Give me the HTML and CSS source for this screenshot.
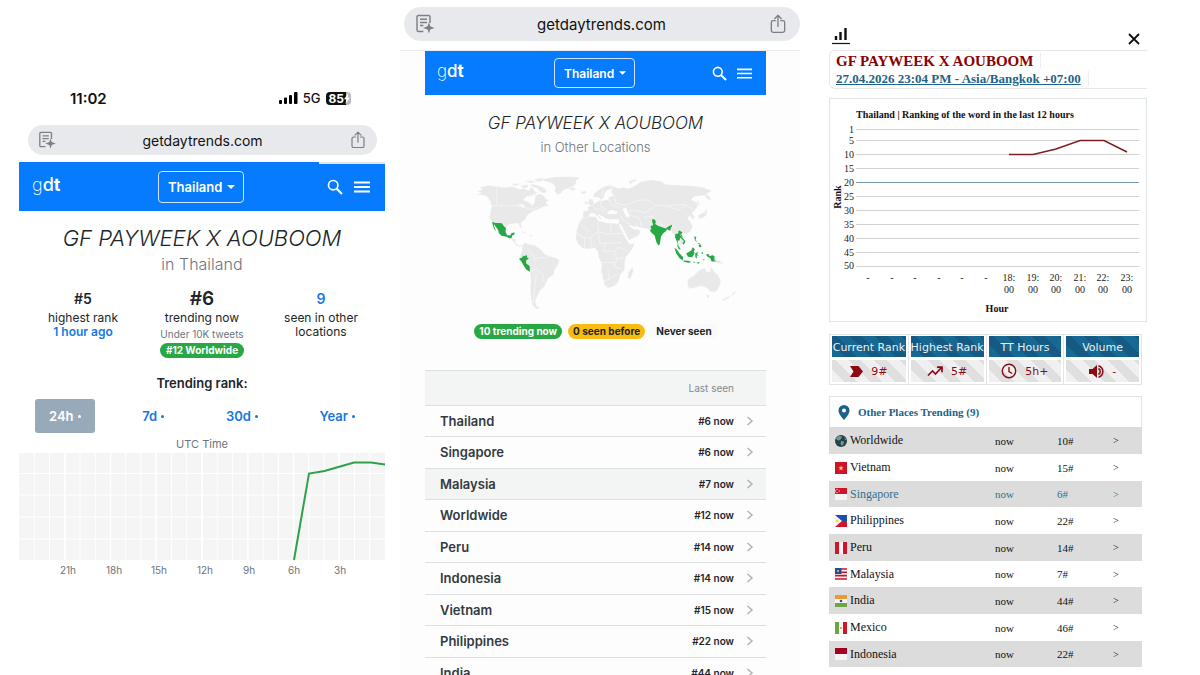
FILE: index.html
```
<!DOCTYPE html>
<html lang="en">
<head>
<meta charset="utf-8">
<meta name="viewport" content="width=device-width, initial-scale=1">
<title>GF PAYWEEK X AOUBOOM trends</title>
<link rel="stylesheet" href="styles.css">
</head>
<body>
<svg class="defs" aria-hidden="true">
  <symbol id="reader" viewBox="0 0 18 18"><path d="M13.500 8V2.500a1.200 1.200 0 0 0-1.200-1.200H3a1.200 1.200 0 0 0-1.200 1.200v12A1.200 1.200 0 0 0 3 15.700h4.500M4.500 4.800h6.300M4.500 7.600h6.300M4.500 10.400h3" fill="none" stroke="currentColor" stroke-width="1.300"/><path d="M12.500 7.500l1.200 3.600 4 1.400-4 1.400-1.200 3.600-1.200-3.600-4-1.400 4-1.400z" fill="currentColor"/></symbol>
  <symbol id="share" viewBox="0 0 18 18"><path d="M6.500 6H4.600A1.600 1.600 0 0 0 3 7.600v7.300a1.600 1.600 0 0 0 1.600 1.600h8.800a1.600 1.600 0 0 0 1.600-1.600V7.600A1.600 1.600 0 0 0 13.400 6h-1.900M9 11.200V1.600M6 4.200l3-3 3 3" fill="none" stroke="currentColor" stroke-width="1.200" stroke-linecap="round" stroke-linejoin="round"/></symbol>
  <symbol id="search" viewBox="0 0 16 16"><circle cx="6.200" cy="6.200" r="4.700" fill="none" stroke="currentColor" stroke-width="1.700"/><path d="M9.500 9.500l5.500 5.500" stroke="currentColor" stroke-width="2.200"/></symbol>
  <symbol id="menu" viewBox="0 0 16 16"><path d="M0 3.500h16M0 8h16M0 12.500h16" stroke="currentColor" stroke-width="1.800"/></symbol>
  <symbol id="chevron" viewBox="0 0 8 10"><path d="M1.500 1l4.500 4-4.500 4" fill="none" stroke="#b3b3b3" stroke-width="1.500"/></symbol>
</svg>
<main class="board">

<section class="phone phone-rank">
  <div class="status">
    <span class="time">11:02</span>
    <span class="signals">
      <svg width="19" height="12" viewBox="0 0 19 12"><rect x="0" y="8" width="3" height="4" rx="1"/><rect x="5" y="5.500" width="3" height="6.500" rx="1"/><rect x="10" y="3" width="3" height="9" rx="1"/><rect x="15" y="0" width="3.500" height="12" rx="1"/></svg>
      <span>5G</span>
      <span class="battery">85<svg width="6" height="11" viewBox="0 0 6 11"><path d="M4.500 0L0 6.200h2.400L1.500 11 6 4.600H3.600z" fill="#fff"/></svg></span>
    </span>
  </div>
  <div class="address">
    <svg class="ic" width="18" height="18"><use href="#reader"/></svg>
    <input type="text" value="getdaytrends.com" aria-label="Address">
    <svg class="ic" width="18" height="18"><use href="#share"/></svg>
  </div>
  <header class="nav loading">
    <a class="logo" href="#"><span class="g">g</span>d<b>t</b></a>
    <label class="place"><select aria-label="Location"><option>Thailand</option></select><svg width="8" height="4" viewBox="0 0 8 4"><path d="M0 0h8L4 4z" fill="#fff"/></svg></label>
    <div class="tools">
      <button type="button" aria-label="Search"><svg width="16" height="16"><use href="#search"/></svg></button>
      <button type="button" aria-label="Menu"><svg width="16" height="16"><use href="#menu"/></svg></button>
    </div>
  </header>
  <h1>GF PAYWEEK X AOUBOOM</h1>
  <p class="sub">in Thailand</p>
  <div class="facts">
    <div><strong>#5</strong><p>highest rank</p><a href="#">1 hour ago</a></div>
    <div><strong class="big">#6</strong><p>trending now</p><small>Under 10K tweets</small><span class="pill green">#12 Worldwide</span></div>
    <div><strong class="blue">9</strong><p>seen in other<br>locations</p></div>
  </div>
  <h2>Trending rank:</h2>
  <div class="periods">
    <button type="button" class="on">24h <i></i></button>
    <button type="button">7d <i></i></button>
    <button type="button">30d <i></i></button>
    <button type="button">Year <i></i></button>
  </div>
  <p class="utc">UTC Time</p>
  <svg class="day-chart" viewBox="0 0 366 125" role="img" aria-label="Trending rank over 24 hours">
    <rect width="366" height="107" fill="#f5f5f5"/>
    <path d="M15.250 0v107M30.500 0v107M45.750 0v107M61 0v107M76.250 0v107M91.500 0v107M106.750 0v107M122 0v107M137.250 0v107M152.500 0v107M167.750 0v107M183 0v107M198.250 0v107M213.500 0v107M228.750 0v107M244 0v107M259.250 0v107M274.500 0v107M289.750 0v107M305 0v107M320.250 0v107M335.500 0v107M350.750 0v107M0 20.500h366M0 42h366M0 64h366M0 86h366" stroke="#fff" stroke-width="1"/>
    <path d="M45.750 0v107M91.500 0v107M137.250 0v107M183 0v107M228.750 0v107M274.500 0v107M320.250 0v107" stroke="#fff" stroke-width="1.500"/>
    <path d="M275 107L290 20.500 305.500 18 335 9.500H352L366 11.500" fill="none" stroke="#2fa04c" stroke-width="2"/>
    <g font-size="10" fill="#6e7378" text-anchor="middle"><text x="49" y="121">21h</text><text x="95" y="121">18h</text><text x="140" y="121">15h</text><text x="186" y="121">12h</text><text x="230" y="121">9h</text><text x="275" y="121">6h</text><text x="321" y="121">3h</text></g>
  </svg>
</section>

<section class="phone phone-places">
  <div class="browser">
    <div class="address large">
      <svg class="ic" width="20" height="20"><use href="#reader"/></svg>
      <input type="text" value="getdaytrends.com" aria-label="Address">
      <svg class="ic" width="20" height="20"><use href="#share"/></svg>
    </div>
  </div>
  <div class="page">
    <header class="nav small">
      <a class="logo" href="#"><span class="g">g</span>d<b>t</b></a>
      <label class="place"><select aria-label="Location"><option>Thailand</option></select><svg width="7" height="4" viewBox="0 0 8 4"><path d="M0 0h8L4 4z" fill="#fff"/></svg></label>
      <div class="tools">
        <button type="button" aria-label="Search"><svg width="15" height="15"><use href="#search"/></svg></button>
        <button type="button" aria-label="Menu"><svg width="15" height="15"><use href="#menu"/></svg></button>
      </div>
    </header>
    <h1>GF PAYWEEK X AOUBOOM</h1>
    <p class="sub">in Other Locations</p>
    <svg class="map" viewBox="0 0 870 450" role="img" aria-label="World map of trending locations">
      <g fill="#e9e9e9" stroke="#fdfdfd" stroke-width="1">
        <path d="M54 96L72 89 60 84 75 78 66 72 95 66 118 70 140 73 165 70 185 78 200 76 213 82 222 70 230 82 238 88 226 96 205 100 197 110 212 116 224 126 230 116 233 96 246 91 258 98 264 106 272 110 263 118 273 126 255 130 242 137 228 142 215 150 206 158 205 166 189 177 192 193 187 191 182 179 168 180 156 181 146 191 140 185 125 178 105 175 97 165 98 148 103 129 98 112 88 98 72 95z"/>
        <path d="M156 222L168 223 175 228 173 236 182 244 192 243 188 248 178 246 168 235z"/>
        <path d="M185 203L198 204 213 212 203 210zM214 213L225 214 222 217 214 216z"/>
        <path d="M252 48L285 42 330 40 365 43 352 54 354 63 335 74 318 79 305 92 298 93 290 84 292 72 283 60 262 55z"/>
        <path d="M188 68L208 64 212 72 198 76zM217 62L240 66 258 74 268 86 256 90 246 84 238 76 222 70zM164 62L184 60 182 66 168 67zM200 54L222 52 234 56 220 60zM228 48L252 44 254 52 240 56zM333 75L349 72 352 79 340 82z"/>
        <path d="M192 247L202 236 212 241 228 243 240 250 250 258 260 270 275 277 295 282 304 290 298 305 290 315 286 332 270 343 264 358 256 370 248 376 242 388 236 400 232 410 236 424 247 431 236 433 224 422 220 405 217 380 219 350 217 322 200 308 190 293 184 284 188 272 193 262z"/>
        <path d="M372 164L395 158 412 160 420 172 445 178 480 180 490 205 500 222 512 240 527 238 520 255 500 280 497 300 498 315 485 330 480 350 468 365 448 371 438 362 432 340 428 318 430 300 420 280 418 262 408 252 385 255 372 252 358 238 352 225 355 200 362 178z"/>
        <path d="M520 309L524 320 514 344 507 342 508 325z"/>
        <path d="M406 103L405 93 420 80 435 70 452 66 466 70 462 76 448 79 438 90 436 102 426 110 420 101z"/>
        <path d="M374 160L374 143 390 141 387 131 402 124 414 116 422 112 436 111 450 108 450 100 466 97 458 88 456 80 465 70 480 76 490 72 510 76 530 66 545 56 575 50 605 54 620 64 660 66 700 68 730 72 755 82 748 88 738 92 750 100 755 112 742 106 735 96 715 98 700 102 696 110 712 118 713 130 705 140 697 149 706 160 699 168 690 156 684 164 692 175 700 188 692 204 675 212 665 210 662 216 676 232 664 246 650 222 638 208 636 198 625 196 617 206 600 220 585 215 575 200 560 194 545 192 528 186 530 196 545 200 540 214 507 231 498 214 482 190 480 180 480 167 450 168 438 164 434 158 428 160 426 168 415 156 405 148 395 150 388 162 378 164z"/>
        <path d="M388 119L393 106 402 108 408 123 394 127zM378 115L386 113 387 122 379 124zM367 85L382 83 384 90 371 92zM510 54L528 48 536 50 520 57 514 65zM715 157L724 150 735 146 739 134 742 142 740 156 728 163 720 166zM712 110L718 116 718 132 713 122z"/>
        <path d="M684 346L700 336 712 325 725 315 738 312 740 322 750 324 755 307 762 322 775 334 783 350 778 368 768 382 752 382 740 370 725 364 705 370 690 373 684 362z"/>
        <path d="M763 283L780 290 790 299 776 298 763 292zM740 392L749 392 747 399 742 399zM819 384L828 379 824 389 812 394zM785 406L808 395 810 399 791 409z"/>
      </g>
      <g fill="#fdfdfd"><path d="M446 145L460 139 477 146 472 151 448 151zM491 136L503 132 505 143 514 157 505 163 498 153zM444 98L447 82 452 82 450 102 438 106zM420 151L434 161 429 164 418 155zM178 124L190 122 202 127 198 133 190 127z"/><path d="M480 181L507 234 511 230 487 183z"/><path d="M510 186L526 198 532 194 516 184z"/></g>
      <path d="M105 127H175L196 131 222 138 242 130M118 70V127M232 84L224 95M354 207L378 222 395 222 419 203 419 172M419 203L455 214 457 179M378 222V250M395 222L400 252M419 203L424 238 455 238 490 237M457 209H490M440 240L434 262 465 262 475 285 497 282M430 295H465L470 310 490 315M451 320V345L435 350M451 345L470 332M366 180L394 204M465 262L480 250 503 260M475 285L466 303M218 257L214 267 230 274 228 288 244 280 273 280M218 322L235 315 247 322 258 338 252 350 266 356M235 334L225 415M402 128L412 138 424 135 439 145M425 114L428 131 445 137M450 110L460 124 485 133M466 98L472 121 505 125 531 112 565 109 589 126 621 127 647 125 675 123 700 137M505 143L529 141 555 148 585 131M515 156L540 162 548 188M485 156L498 174 514 182M552 162L580 158 584 170M621 127L655 140 678 127M600 178L620 190 640 184 658 203 676 210M436 71L429 99M455 69L460 87" fill="none" stroke="#f8f8f8" stroke-width="2"/>
      <g fill="#28a745">
        <path d="M104 174L112 177 125 178 133 179 138 186 145 192 144 205 149 214 158 215 162 208 172 206 169 213 163 216 163 221 157 224 147 219 132 216 124 208 122 199 114 188 110 181 111 191 116 203 110 196 107 186z"/>
        <path d="M184 284L192 281 197 275 203 277 204 272 208 275 207 280 213 283 205 289 205 298 213 303 216 308 216 323 206 317 198 305 191 292z"/>
        <path d="M578 168L586 167 590 174 588 181 596 186 610 191 620 194 624 190 631 186 637 183 638 188 634 193 633 201 627 199 624 196 620 202 611 209 605 219 602 240 598 245 592 236 586 214 578 208 574 204 573 198 577 196 574 188 582 184 580 176z"/>
        <path d="M648 210L654 211 657 206 657 200 665 203 666 208 660 209 664 217 672 225 678 232 672 243 669 236 674 233 666 224 662 222 660 230 655 230 655 237 660 246 654 239 651 229 647 221zM660 200L669 206 665 211 671 222 665 217 661 209z"/>
        <path d="M645 252L651 255 660 268 671 280 670 289 661 283 651 269zM652 240L658 247 664 257 658 256zM672 289L686 290 696 294 686 296 673 293zM680 268L687 265 695 259 700 250 706 257 702 262 705 267 698 280 685 278zM707 267L718 264 712 269 717 275 711 274 712 284 707 280zM739 271L746 270 749 276 759 274 764 277 764 292 755 292 752 283 742 277zM704 218L710 219 708 228 714 235 706 229zM717 244L724 242 725 249 719 250zM715 237L721 238 719 243zM699 293L707 294 705 297zM710 297L720 293 717 299zM724 268L729 264 730 270zM730 285L735 286 732 289zM764 289L768 291 765 294z"/>
      </g>
    </svg>
    <div class="legend"><span class="pill green">10 trending now</span><span class="pill amber">0 seen before</span><span class="pill pale">Never seen</span></div>
    <table class="places">
      <thead><tr><th></th><th class="seen">Last seen</th><th></th></tr></thead>
      <tbody>
        <tr><td><a href="#">Thailand</a></td><td class="seen">#6 now</td><td><svg width="8" height="10"><use href="#chevron"/></svg></td></tr>
        <tr><td><a href="#">Singapore</a></td><td class="seen">#6 now</td><td><svg width="8" height="10"><use href="#chevron"/></svg></td></tr>
        <tr class="hover"><td><a href="#">Malaysia</a></td><td class="seen">#7 now</td><td><svg width="8" height="10"><use href="#chevron"/></svg></td></tr>
        <tr><td><a href="#">Worldwide</a></td><td class="seen">#12 now</td><td><svg width="8" height="10"><use href="#chevron"/></svg></td></tr>
        <tr><td><a href="#">Peru</a></td><td class="seen">#14 now</td><td><svg width="8" height="10"><use href="#chevron"/></svg></td></tr>
        <tr><td><a href="#">Indonesia</a></td><td class="seen">#14 now</td><td><svg width="8" height="10"><use href="#chevron"/></svg></td></tr>
        <tr><td><a href="#">Vietnam</a></td><td class="seen">#15 now</td><td><svg width="8" height="10"><use href="#chevron"/></svg></td></tr>
        <tr><td><a href="#">Philippines</a></td><td class="seen">#22 now</td><td><svg width="8" height="10"><use href="#chevron"/></svg></td></tr>
        <tr><td><a href="#">India</a></td><td class="seen">#44 now</td><td><svg width="8" height="10"><use href="#chevron"/></svg></td></tr>
      </tbody>
    </table>
  </div>
</section>

<section class="report">
  <div class="report-top">
    <svg width="18" height="18" viewBox="0 0 18 18"><path d="M4 9v4M8.500 5v8M13.500 1v12" stroke="#111" stroke-width="2.400"/><path d="M0 16.500h18" stroke="#111" stroke-width="1.200"/></svg>
    <button type="button" aria-label="Close"><svg width="12" height="12" viewBox="0 0 12 12"><path d="M1 1l10 10M11 1L1 11" stroke="#111" stroke-width="1.800"/></svg></button>
  </div>
  <div class="report-head">
    <h1><span>GF PAYWEEK X AOUBOOM</span></h1>
    <p><a href="#">27.04.2026 23:04 PM - Asia/Bangkok +07:00</a></p>
  </div>
  <div class="chart-box">
    <svg viewBox="0 0 316 222" role="img" aria-label="Ranking of the word in the last 12 hours">
      <text class="b" x="26" y="19">Thailand | Ranking of the word in the last 12 hours</text>
      <path d="M26 30.500h283M26 41.500h283M26 55.500h283M26 69.500h283M26 97.500h283M26 111.500h283M26 125.500h283M26 139.500h283M26 153.500h283M26 167.500h283" stroke="#d2d2d2"/>
      <path d="M26 83.500h283" stroke="#7896ae"/>
      <path d="M179 55.500H203L226 50 250 41.500H274L297 53" fill="none" stroke="#801d22" stroke-width="1.500"/>
      <g text-anchor="end"><text x="24" y="34">1</text><text x="24" y="45">5</text><text x="24" y="59">10</text><text x="24" y="73">15</text><text x="24" y="87">20</text><text x="24" y="101">25</text><text x="24" y="115">30</text><text x="24" y="129">35</text><text x="24" y="143">40</text><text x="24" y="157">45</text><text x="24" y="170">50</text></g>
      <g text-anchor="middle"><text x="38" y="182">-</text><text x="62" y="182">-</text><text x="85" y="182">-</text><text x="109" y="182">-</text><text x="132" y="182">-</text><text x="156" y="182">-</text>
      <text x="179" y="182">18:</text><text x="203" y="182">19:</text><text x="226" y="182">20:</text><text x="250" y="182">21:</text><text x="273" y="182">22:</text><text x="297" y="182">23:</text>
      <text x="179" y="194">00</text><text x="203" y="194">00</text><text x="226" y="194">00</text><text x="250" y="194">00</text><text x="273" y="194">00</text><text x="297" y="194">00</text>
      <text class="b" x="167" y="213">Hour</text><text class="b" transform="translate(11 98) rotate(-90)">Rank</text></g>
    </svg>
  </div>
  <dl class="stats">
    <div><dt>Current Rank</dt><dd><svg width="13" height="11" viewBox="0 0 13 11"><path d="M0 0h8.500L13 5.500 8.500 11H0l3.500-5.500z" fill="#8b0b14"/></svg>9#</dd></div>
    <div><dt>Highest Rank</dt><dd><svg width="16" height="11" viewBox="0 0 16 11"><path d="M1 9.500l4.500-4.500 3 3L14 2M10 1.200h5v5" fill="none" stroke="#8b0b14" stroke-width="1.700"/></svg>5#</dd></div>
    <div><dt>TT Hours</dt><dd><svg width="16" height="16" viewBox="0 0 16 16"><circle cx="8" cy="8" r="6.700" fill="none" stroke="#8b0b14" stroke-width="1.400"/><path d="M8 4v4.500l3.200 2" fill="none" stroke="#8b0b14" stroke-width="1.400"/></svg>5h+</dd></div>
    <div><dt>Volume</dt><dd><svg width="15" height="13" viewBox="0 0 15 13"><path d="M0 4h3.500L8 0v13L3.500 9H0z" fill="#8b0b14"/><path d="M9.500 3.500c2.300 1.500 2.300 4.500 0 6M9.500.8c5.800 2 5.800 9.400 0 11.400" fill="none" stroke="#8b0b14" stroke-width="1.500"/></svg>-</dd></div>
  </dl>
  <div class="others">
    <h2><svg width="12" height="15" viewBox="0 0 12 15"><path fill-rule="evenodd" d="M6 0a5.500 5.500 0 0 0-5.500 5.500C.500 9.500 6 15 6 15s5.500-5.500 5.500-9.500A5.500 5.500 0 0 0 6 0zm0 3.500a2 2 0 1 1 0 4 2 2 0 0 1 0-4z" fill="#1a628a"/></svg>Other Places Trending (9)</h2>
    <table>
      <tbody>
      <tr><td><a href="#"><svg width="12" height="12" viewBox="0 0 12 12"><circle cx="6" cy="6" r="6" fill="#24414d"/><path d="M1 3l3-2 3 .5L6 4 4 5.500 2 5zM6 6l3 .5L8.500 9 7 11 5.500 9zM9.500 2L11.500 5 10 5z" fill="#6f9c91"/></svg>Worldwide</a></td><td>now</td><td>10#</td><td>&gt;</td></tr>
      <tr><td><a href="#"><svg width="12" height="12" viewBox="0 0 12 12"><path fill="#d0142c" d="M0 0h12v12H0z"/><path d="M6 3.500l.700 1.800h1.800L7.100 6.500l.500 1.900L6 7.300 4.400 8.400l.500-1.900L3.500 5.300h1.800z" fill="#ffd84a"/></svg>Vietnam</a></td><td>now</td><td>15#</td><td>&gt;</td></tr>
      <tr class="current"><td><a href="#"><svg width="12" height="12" viewBox="0 0 12 12"><path fill="#f4f4f4" d="M0 0h12v12H0z"/><path fill="#d0142c" d="M0 0h12v6H0z"/><path d="M2.800 1.500a1.700 1.700 0 1 0 0 3" fill="none" stroke="#f6b5bc" stroke-width=".8"/><circle cx="4.200" cy="3" r=".7" fill="#f6b5bc"/></svg>Singapore</a></td><td>now</td><td>6#</td><td>&gt;</td></tr>
      <tr><td><a href="#"><svg width="12" height="12" viewBox="0 0 12 12"><path fill="#1d50a8" d="M0 0h12v6H0z"/><path fill="#d0142c" d="M0 6h12v6H0z"/><path fill="#f4f4f4" d="M0 0l7 6-7 6z"/><circle cx="2.200" cy="6" r="1.400" fill="#ffd84a"/></svg>Philippines</a></td><td>now</td><td>22#</td><td>&gt;</td></tr>
      <tr><td><a href="#"><svg width="12" height="12" viewBox="0 0 12 12"><path fill="#f4f4f4" d="M0 0h12v12H0z"/><path fill="#d0142c" d="M0 0h4v12H0zM8 0h4v12H8z"/></svg>Peru</a></td><td>now</td><td>14#</td><td>&gt;</td></tr>
      <tr><td><a href="#"><svg width="12" height="12" viewBox="0 0 12 12"><path fill="#f4f4f4" d="M0 0h12v12H0z"/><path d="M0 1h12M0 4.300h12M0 7.600h12M0 11h12" stroke="#d0142c" stroke-width="1.600"/><path fill="#22508f" d="M0 0h6.500v6H0z"/><circle cx="3" cy="3" r="1.100" fill="#c9c96a"/></svg>Malaysia</a></td><td>now</td><td>7#</td><td>&gt;</td></tr>
      <tr><td><a href="#"><svg width="12" height="12" viewBox="0 0 12 12"><path fill="#f4f4f4" d="M0 0h12v12H0z"/><path fill="#f4962c" d="M0 0h12v4H0z"/><path fill="#6da544" d="M0 8h12v4H0z"/><circle cx="6" cy="6" r="1.300" fill="#2b57ad"/></svg>India</a></td><td>now</td><td>44#</td><td>&gt;</td></tr>
      <tr><td><a href="#"><svg width="12" height="12" viewBox="0 0 12 12"><path fill="#f4f4f4" d="M0 0h12v12H0z"/><path fill="#6da544" d="M0 0h4v12H0z"/><path fill="#d0142c" d="M8 0h4v12H8z"/><circle cx="6" cy="6" r="1" fill="#c98f4a"/></svg>Mexico</a></td><td>now</td><td>46#</td><td>&gt;</td></tr>
      <tr><td><a href="#"><svg width="12" height="12" viewBox="0 0 12 12"><path fill="#f4f4f4" d="M0 0h12v12H0z"/><path fill="#a2001d" d="M0 0h12v6H0z"/></svg>Indonesia</a></td><td>now</td><td>22#</td><td>&gt;</td></tr>
      </tbody>
    </table>
  </div>
</section>
</main>
</body>
</html>
```
FILE: styles.css
```
* { box-sizing: border-box; }
body, h1, h2, p, dl, dd { margin: 0; }
body { background: #fff; color: #212529; font-family: Inter, "Liberation Sans", sans-serif; font-size: 12px; }
a { color: inherit; text-decoration: none; }
button, input, select { font: inherit; color: inherit; background: none; border: 0; padding: 0; margin: 0; }
svg { display: block; flex: none; }
table { width: 100%; border-collapse: collapse; }
td, th { padding: 0; text-align: left; }
.defs { position: absolute; width: 0; height: 0; }
.board { display: grid; grid-template-columns: repeat(3, minmax(0, 1fr)); height: 100vh; overflow: hidden; }

.phone { text-align: center; }
.phone-rank { padding: 84px 15px 0 19px; }
.status { display: flex; justify-content: space-between; align-items: center; height: 28px; padding: 0 34px 0 51px; color: #111; }
.time { font-size: 15px; font-weight: 600; }
.signals { display: flex; align-items: center; gap: 5px; font-size: 13px; font-weight: 500; }
.battery { display: flex; align-items: center; height: 13px; padding: 0 1px 0 3px; border-radius: 4px; background: linear-gradient(90deg, #111 82%, #b8b8b8 82%); color: #fff; font-size: 12px; font-weight: 700; }

.address { display: flex; align-items: center; height: 30px; margin: 13px 8px 7px 9px; padding: 0 10px; border-radius: 15px; background: #e8e9ed; color: #111; font-size: 14px; }
.address input { flex: 1; min-width: 0; text-align: center; outline: 0; }
.ic { color: #7d7f84; }
.address.large { height: 34px; margin: 0 0 0 4px; border-radius: 17px; padding: 0 12px 0 11px; font-size: 15px; }

.nav { display: grid; grid-template-columns: 1fr auto 1fr; align-items: center; height: 49px; padding: 0 15px 0 13px; background: #067bfe; color: #fff; }
.loading { background: linear-gradient(90deg, transparent 82%, #dfe5ea 82%) 0 0 / 100% 2px no-repeat #067bfe; }
.logo { justify-self: start; font-size: 18px; line-height: 22px; font-weight: 500; padding-bottom: 4px; }
.logo .g { font-weight: 200; }
.logo b { font-weight: 700; }
.place { display: flex; align-items: center; gap: 4px; height: 32px; padding: 0 8px 0 9px; border: 1px solid #cfe5ff; border-radius: 4px; font-size: 13px; font-weight: 600; }
.place select { appearance: none; }
.place option { color: #212529; }
.tools { justify-self: end; display: flex; gap: 11px; }
.nav.small { height: 44px; padding: 0 14px 0 12px; }
.small .logo { font-size: 17px; }
.small .place { height: 30px; font-size: 12px; }
.small .tools { gap: 10px; }

.phone h1 { font-size: 22px; line-height: 32px; font-weight: 300; font-style: italic; margin-top: 11px; white-space: nowrap; }
.sub { font-size: 16px; line-height: 20px; font-weight: 300; color: #6c757d; }
.facts { display: grid; grid-template-columns: 128px 1fr 128px; margin-top: 14px; font-size: 12px; line-height: 14px; }
.facts div { display: flex; flex-direction: column; align-items: center; }
.facts strong { font-size: 14px; line-height: 22px; font-weight: 600; margin-bottom: 1px; }
.facts .big { font-size: 19px; }
.facts a { color: #1478ea; font-weight: 600; }
.facts .blue { color: #1478ea; }
.facts small { font-size: 10px; line-height: 16px; color: #6c757d; padding-top: 1px; margin-bottom: 1px; }
.pill { height: 15px; padding: 0 6px; border-radius: 8px; font-size: 10px; line-height: 15px; font-weight: 700; white-space: nowrap; }
.green { background: #28a745; color: #fff; }
.amber { background: #f8bb10; }
.pale { background: #f8f9fa; }
.phone h2 { font-size: 13px; line-height: 18px; font-weight: 600; margin-top: 16px; }
.periods { display: flex; justify-content: space-between; padding: 0 16px; margin-top: 7px; }
.periods button { display: flex; align-items: center; gap: 4px; height: 34px; padding: 0 14px; border-radius: 3px; color: #1478dc; font-size: 13px; font-weight: 600; }
.periods i { width: 3px; height: 3px; border-radius: 50%; background: currentColor; }
.periods .on { background: #98a9b9; color: #fff; }
.utc { font-size: 11px; line-height: 14px; color: #6c757d; margin: 4px 0 2px; }
.day-chart { width: 100%; overflow: visible; }

.phone-places { background: #fdfdfd; }
.browser { padding: 7px 0 9px; border-bottom: 1px solid #ececec; background: #fff; }
.page { padding: 0 34px 0 25px; }
.phone-places h1 { font-size: 17px; line-height: 28px; margin-top: 14px; }
.phone-places .sub { font-size: 13px; }
.map { width: 86%; margin: 6px auto 9px 32px; }
.legend { display: flex; justify-content: center; gap: 6px; margin-bottom: 31px; }
.legend .pill { padding: 0 5px; }
.places tr { height: 31px; border-bottom: 1px solid #dcdfe1; }
.places tbody tr:nth-child(even) { height: 32px; }
.places thead tr { height: 35px; border-top: 1px solid #dcdfe1; background: #f3f4f4; }
.places .seen { text-align: right; font-size: 10px; font-weight: 600; }
.places thead .seen { font-weight: 400; color: #85898d; }
.places td:first-child { padding-left: 15px; font-size: 13px; font-weight: 600; color: #343a40; }
.places td:last-child, .places th:last-child { width: 32px; padding-left: 12px; }
.places .hover { background: #f3f4f4; }

.report { padding: 26px 53px 0 29px; font-family: "Liberation Serif", serif; color: #111; }
.report-top { display: flex; justify-content: space-between; align-items: flex-start; height: 24px; padding: 1px 7px 0 3px; }
.report-top button { padding-top: 6px; }
.report-head { padding: 1px 6px 0; height: 39px; border: 1px solid #e8e8e8; border-right: 0; border-radius: 6px 0 0 6px; }
.report-head h1 { font-size: 15px; line-height: 18px; color: #8b0000; }
.report-head h1 span, .report-head p a { padding-right: 7px; border-right: 1px solid #eee; }
.report-head p { font-size: 13px; line-height: 17px; font-weight: 700; }
.report-head p a { color: #1f6488; text-decoration: underline; }
.chart-box { margin-top: 9px; border: 1px solid #dfe4e6; }
.chart-box svg { width: 100%; font-size: 10px; fill: #222; }
.chart-box .b { font-weight: 700; fill: #111; }
.stats { display: grid; grid-template-columns: repeat(4, minmax(0, 1fr)); margin: 12px 5px 0 0; border: 1px solid #e4e4e4; font-family: "DejaVu Sans", sans-serif; font-size: 11px; text-align: center; }
.stats div { padding: 1px 2px 2px; }
.stats div + div { border-left: 1px solid #e4e4e4; }
.stats dt { height: 21px; line-height: 23px; color: #e8f1f6; white-space: nowrap; background: repeating-linear-gradient(45deg, #176893 0 9px, #145a82 9px 18px); display: flex; justify-content: center; }
.stats dd { display: flex; align-items: center; justify-content: center; gap: 8px; height: 22px; margin-top: 3px; color: #8b0b14; background: repeating-linear-gradient(45deg, #f0f0f0 0 9px, #dfdfdf 9px 18px); }
.others { margin: 11px 5px 0 0; }
.others h2 { display: flex; align-items: center; gap: 8px; height: 31px; padding-left: 8px; border: 1px solid #e4e4e4; border-bottom: 0; color: #1a628a; font-size: 11px; }
.others tr { height: 27px; }
.others tr:nth-child(3n) { height: 26px; }
.others tr:nth-child(odd) { background: #dcdcdc; }
.others td { width: 62px; font-size: 11px; }
.others td:nth-child(3) { width: 56px; }
.others td:nth-child(4) { width: 29px; font-size: 10px; }
.others td:first-child { width: auto; padding-left: 6px; font-size: 12px; }
.others td a { display: flex; align-items: center; gap: 3px; }
.others .current { color: #33708f; }
```
